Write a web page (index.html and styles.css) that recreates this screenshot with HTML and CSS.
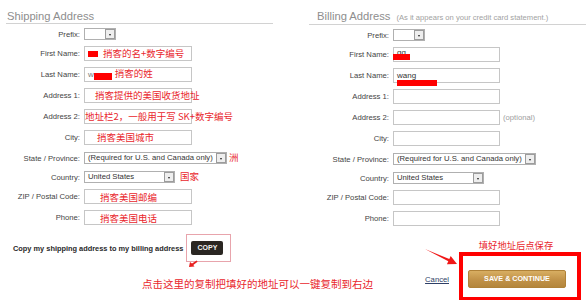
FILE: index.html
```html
<!DOCTYPE html>
<html lang="en">
<head>
<meta charset="utf-8">
<title>Address</title>
<link rel="stylesheet" href="styles.css">
</head>
<body>
<div class="page">
  <section class="col ship">
    <h2 class="head"><span class="head-title">Shipping Address</span></h2>
    <div class="form">
      <div class="row row-first"><label class="lbl">Prefix:</label><div class="select s-prefix"><span class="sel-text"></span><span class="sel-btn"></span></div></div>
      <div class="row"><label class="lbl">First Name:</label><div class="input"><span class="redact r-first"></span><span class="note n-first">捎客的名+数字编号</span></div></div>
      <div class="row"><label class="lbl">Last Name:</label><div class="input"><span class="val v-w">w</span><span class="redact r-last"></span><span class="note n-last">捎客的姓</span></div></div>
      <div class="row"><label class="lbl">Address 1:</label><div class="input"><span class="note n-a1">捎客提供的美国收货地址</span></div></div>
      <div class="row"><label class="lbl">Address 2:</label><div class="input in-flush"><span class="note n-a2">地址栏2，一般用于写 SK+数字编号</span></div></div>
      <div class="row"><label class="lbl">City:</label><div class="input"><span class="note n-city">捎客美国城市</span></div></div>
      <div class="row row-sel"><label class="lbl">State / Province:</label><div class="select s-state"><span class="sel-text">(Required for U.S. and Canada only)</span><span class="sel-btn"></span></div><span class="note n-side">洲</span></div>
      <div class="row row-sel"><label class="lbl">Country:</label><div class="select s-country"><span class="sel-text">United States</span><span class="sel-btn"></span></div><span class="note n-side n-country">国家</span></div>
      <div class="row"><label class="lbl">ZIP / Postal Code:</label><div class="input"><span class="note n-zip">捎客美国邮编</span></div></div>
      <div class="row"><label class="lbl">Phone:</label><div class="input"><span class="note n-zip">捎客美国电话</span></div></div>
    </div>
    <div class="copy-row">
      <span class="copy-text">Copy my shipping address to my billing address</span>
      <div class="mark-box"><button class="copy-btn" type="button">COPY</button></div>
    </div>
    <p class="note-line">点击这里的复制把填好的地址可以一键复制到右边</p>
  </section>

  <section class="col bill">
    <h2 class="head"><span class="head-title">Billing Address</span><span class="sub">(As it appears on your credit card statement.)</span></h2>
    <div class="form">
      <div class="row row-first"><label class="lbl">Prefix:</label><div class="select s-prefix"><span class="sel-text"></span><span class="sel-btn"></span></div></div>
      <div class="row"><label class="lbl">First Name:</label><div class="input"><span class="val v-gg">gg</span><span class="redact-over ro-first"></span></div></div>
      <div class="row"><label class="lbl">Last Name:</label><div class="input"><span class="val">wang</span><span class="redact-over ro-last"></span></div></div>
      <div class="row"><label class="lbl">Address 1:</label><div class="input"></div></div>
      <div class="row"><label class="lbl">Address 2:</label><div class="input"></div><span class="optional">(optional)</span></div>
      <div class="row"><label class="lbl">City:</label><div class="input"></div></div>
      <div class="row row-sel"><label class="lbl">State / Province:</label><div class="select s-state"><span class="sel-text">(Required for U.S. and Canada only)</span><span class="sel-btn"></span></div></div>
      <div class="row row-sel"><label class="lbl">Country:</label><div class="select s-country"><span class="sel-text">United States</span><span class="sel-btn"></span></div></div>
      <div class="row"><label class="lbl">ZIP / Postal Code:</label><div class="input"></div></div>
      <div class="row"><label class="lbl">Phone:</label><div class="input"></div></div>
    </div>
    <div class="actions">
      <a class="cancel" href="#">Cancel</a>
      <div class="save-group">
        <span class="save-note">填好地址后点保存</span>
        <div class="mark-red"><button class="save-btn" type="button">SAVE &amp; CONTINUE</button></div>
      </div>
    </div>
  </section>

  <svg class="arrow-big" width="44" height="26" viewBox="0 0 44 26" aria-hidden="true">
    <polygon points="5,5 29.3,15.1 30.7,12.1 37,20 26.9,20.3 28.3,17.3" fill="#f01818"/>
  </svg>
  <svg class="arrow-small" width="12" height="11" viewBox="0 0 12 11" aria-hidden="true">
    <polygon points="2,9 3,4 5,5.6 9.6,2.4 10.6,3.8 6.3,7 7.5,8.4" fill="#e82020"/>
  </svg>
</div>
</body>
</html>
```
FILE: styles.css
```css
html, body {
  margin: 0;
  padding: 0;
  background: #ffffff;
}
body {
  font-family: "Liberation Sans", Arial, sans-serif;
  color: #333333;
}
.page {
  position: relative;
  width: 586px;
  height: 300px;
  display: flex;
  overflow: hidden;
}
.col {
  display: flex;
  flex-direction: column;
}
.ship {
  margin-left: 6px;
  width: 267px;
}
.bill {
  margin-left: 36px;
  width: 277px;
}
.head {
  margin: 10px 0 0;
  font-weight: normal;
  font-size: 11.2px;
  line-height: 13px;
  color: #8e8e8e;
  border-bottom: 1px solid #d2d2d2;
  white-space: nowrap;
}
.ship .head {
  padding-left: 1px;
}
.bill .head {
  padding-left: 8px;
}
.sub {
  margin-left: 6px;
  font-size: 7.6px;
  color: #a2a2a2;
}
.form {
  display: flex;
  flex-direction: column;
}
.row {
  display: flex;
  align-items: center;
  margin-top: 6px;
  white-space: nowrap;
}
.row-first {
  margin-top: 4px;
}
.row-sel {
  margin-top: 7px;
}
.lbl {
  box-sizing: border-box;
  flex: none;
  text-align: right;
  padding-right: 4px;
  font-size: 7.7px;
  color: #444444;
}
.ship .lbl {
  width: 78px;
}
.bill .lbl {
  width: 84px;
}
.input {
  position: relative;
  box-sizing: border-box;
  flex: none;
  width: 108px;
  height: 15px;
  border: 1px solid #c6c6c6;
  background: #ffffff;
  display: flex;
  align-items: center;
  padding-left: 3px;
  overflow: visible;
}
.bill .input {
  width: 107px;
}
.in-flush {
  padding-left: 0;
}
.val {
  font-size: 8px;
  color: #333333;
  line-height: 1;
}
.v-w {
  color: #777777;
}
.note {
  font-family: "Noto Sans CJK SC", "Noto Sans", sans-serif;
  font-size: 9.5px;
  line-height: 1;
  color: #e9272d;
}
.redact {
  flex: none;
  display: block;
  background: #ff0000;
}
.r-first {
  width: 10px;
  height: 6px;
}
.n-first {
  margin-left: 5px;
}
.r-last {
  width: 18px;
  height: 7px;
  margin-top: 3px;
}
.n-last {
  margin-left: 3px;
  margin-bottom: 2px;
}
.n-a1 {
  margin-left: 7px;
}
.n-a2 {
  margin-left: 0;
}
.n-city {
  margin-left: 9px;
}
.n-zip {
  margin-left: 12px;
  margin-top: 2px;
}
.n-side {
  margin-left: 2px;
}
.n-country {
  margin-left: 5px;
}
.v-gg {
  margin-top: -3px;
}
.redact-over {
  position: absolute;
  background: #ff0000;
}
.ro-first {
  left: -1px;
  top: 6px;
  width: 17px;
  height: 6px;
}
.ro-last {
  left: 3px;
  top: 11px;
  width: 40px;
  height: 6px;
}
.optional {
  margin-left: 3px;
  font-size: 7.7px;
  color: #a0a0a0;
}
.select {
  box-sizing: border-box;
  flex: none;
  height: 12px;
  border: 1px solid #b0b0b0;
  background: #ffffff;
  display: flex;
  align-items: center;
  justify-content: space-between;
}
.s-prefix {
  width: 32px;
}
.s-state {
  width: 143px;
}
.s-country {
  width: 91px;
}
.sel-text {
  padding-left: 3px;
  font-size: 7.7px;
  color: #333333;
  line-height: 1;
}
.sel-btn {
  box-sizing: border-box;
  flex: none;
  position: relative;
  width: 10px;
  height: 10px;
  border: 1px solid #9c9c9c;
  background: #eeeeee;
}
.sel-btn::after {
  content: "";
  position: absolute;
  left: 2.5px;
  top: 3.5px;
  border-left: 1.5px solid transparent;
  border-right: 1.5px solid transparent;
  border-top: 2px solid #222222;
}
.copy-row {
  display: flex;
  align-items: center;
  margin-top: 9px;
  padding-left: 7px;
  white-space: nowrap;
}
.copy-text {
  font-size: 7.4px;
  font-weight: bold;
  color: #2a2a2a;
}
.mark-box {
  margin-left: 3px;
  border: 1px solid #e8a4ac;
  padding: 6px 7px 6px 4px;
  display: flex;
}
.copy-btn {
  width: 32px;
  height: 14px;
  padding: 0;
  border: none;
  border-radius: 2px;
  background: #2a2622;
  color: #f2f2f2;
  font-family: "Liberation Sans", Arial, sans-serif;
  font-weight: bold;
  font-size: 7px;
  line-height: 14px;
}
.note-line {
  margin: 16px 0 0 136px;
  font-family: "Noto Sans CJK SC", "Noto Sans", sans-serif;
  font-size: 10.5px;
  line-height: 12px;
  color: #e9272d;
  white-space: nowrap;
}
.actions {
  display: flex;
  justify-content: flex-end;
  align-items: flex-end;
  margin-top: 13px;
  padding-right: 5px;
}
.cancel {
  margin-right: 10px;
  margin-bottom: 16px;
  font-size: 7.7px;
  line-height: 10px;
  color: #2e3f66;
  text-decoration: underline;
}
.save-group {
  display: flex;
  flex-direction: column;
  align-items: center;
}
.save-note {
  padding-right: 8px;
  font-family: "Noto Sans CJK SC", "Noto Sans", sans-serif;
  font-size: 9.3px;
  line-height: 13px;
  color: #e9272d;
  white-space: nowrap;
}
.mark-red {
  border: 4px solid #ff0000;
  padding: 14px 11px 9px 5px;
  display: flex;
}
.save-btn {
  width: 98px;
  height: 18px;
  padding: 0;
  border: 1px solid #b08238;
  border-radius: 2px;
  background: linear-gradient(#d8ae62, #c19248 55%, #b4863c);
  color: #ffffff;
  font-family: "Liberation Sans", Arial, sans-serif;
  font-weight: bold;
  font-size: 7.2px;
  line-height: 16px;
}
.arrow-big {
  position: absolute;
  left: 420px;
  top: 244px;
}
.arrow-small {
  position: absolute;
  left: 187px;
  top: 258px;
}
```
